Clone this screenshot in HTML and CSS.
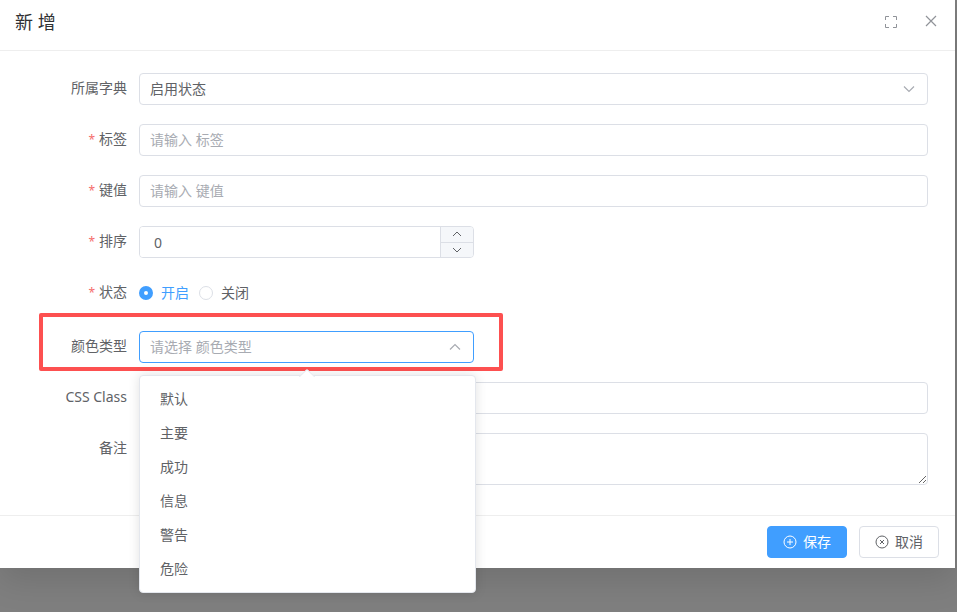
FILE: index.html
```html
<!DOCTYPE html>
<html lang="zh-CN">
<head>
    <meta charset="UTF-8">
    <title>新增字典数据</title>
    <meta name="viewport" content="width=device-width, initial-scale=1.0">
    <link rel="stylesheet" href="styles.css">
</head>
<body>
    <div class="dialog" role="dialog" aria-labelledby="dialog-title">
        <header class="dialog-header">
            <h1 class="dialog-title" id="dialog-title">新 增</h1>
            <div class="dialog-tools">
                <button type="button" class="icon-button" aria-label="全屏">
                    <svg viewBox="0 0 16 16" width="16" height="16" fill="none" stroke="currentColor">
                        <path d="M2.5 6V2.5H6M10 2.5H13.5V6M13.5 10V13.5H10M6 13.5H2.5V10"/>
                    </svg>
                </button>
                <button type="button" class="icon-button" aria-label="关闭">
                    <svg viewBox="0 0 16 16" width="16" height="16" fill="none" stroke="currentColor" stroke-width="1.2">
                        <path d="M3 2L13 12M13 2L3 12"/>
                    </svg>
                </button>
            </div>
        </header>

        <form class="dialog-form">
            <div class="form-body">
                <div class="form-item">
                    <label class="form-label" for="dict">所属字典</label>
                    <div class="form-content select-box">
                        <select class="control" id="dict">
                            <option>启用状态</option>
                        </select>
                        <svg class="select-arrow" viewBox="0 0 14 14" width="14" height="14" fill="none" stroke="currentColor" stroke-width="1.2">
                            <path d="M2 4.5L7 9.5L12 4.5"/>
                        </svg>
                    </div>
                </div>

                <div class="form-item required">
                    <label class="form-label" for="label">标签</label>
                    <div class="form-content">
                        <input class="control" id="label" type="text" placeholder="请输入 标签">
                    </div>
                </div>

                <div class="form-item required">
                    <label class="form-label" for="value">键值</label>
                    <div class="form-content">
                        <input class="control" id="value" type="text" placeholder="请输入 键值">
                    </div>
                </div>

                <div class="form-item required half">
                    <label class="form-label" for="sort">排序</label>
                    <div class="form-content number-box">
                        <input class="number-input" id="sort" type="number" value="0">
                        <div class="number-steps">
                            <button type="button" class="step-button" aria-label="增加">
                                <svg viewBox="0 0 12 12" width="12" height="12" fill="none" stroke="currentColor">
                                    <path d="M2 8L6 4L10 8"/>
                                </svg>
                            </button>
                            <button type="button" class="step-button" aria-label="减少">
                                <svg viewBox="0 0 12 12" width="12" height="12" fill="none" stroke="currentColor">
                                    <path d="M2 4L6 8L10 4"/>
                                </svg>
                            </button>
                        </div>
                    </div>
                </div>

                <div class="form-item required status-item" role="radiogroup" aria-labelledby="status-label">
                    <span class="form-label" id="status-label">状态</span>
                    <div class="form-content radio-group">
                        <label class="radio"><input type="radio" name="status" value="1" checked><span>开启</span></label>
                        <label class="radio"><input type="radio" name="status" value="0"><span>关闭</span></label>
                    </div>
                </div>

                <div class="form-item half highlight">
                    <label class="form-label" for="color">颜色类型</label>
                    <div class="form-content select-box">
                        <select class="control placeholder active" id="color">
                            <option value="">请选择 颜色类型</option>
                        </select>
                        <svg class="select-arrow" viewBox="0 0 14 14" width="14" height="14" fill="none" stroke="currentColor" stroke-width="1.2">
                            <path d="M2 9.5L7 4.5L12 9.5"/>
                        </svg>
                        <ul class="dropdown" role="listbox" aria-label="颜色类型">
                            <li class="dropdown-item" role="option">默认</li>
                            <li class="dropdown-item" role="option">主要</li>
                            <li class="dropdown-item" role="option">成功</li>
                            <li class="dropdown-item" role="option">信息</li>
                            <li class="dropdown-item" role="option">警告</li>
                            <li class="dropdown-item" role="option">危险</li>
                        </ul>
                    </div>
                </div>

                <div class="form-item">
                    <label class="form-label" for="css-class">CSS Class</label>
                    <div class="form-content">
                        <input class="control" id="css-class" type="text">
                    </div>
                </div>

                <div class="form-item">
                    <label class="form-label" for="remark">备注</label>
                    <div class="form-content">
                        <textarea class="control textarea" id="remark"></textarea>
                    </div>
                </div>
            </div>

            <footer class="dialog-footer">
                <button type="submit" class="button button-primary">
                    <svg viewBox="0 0 14 14" width="14" height="14" fill="none" stroke="currentColor">
                        <circle cx="7" cy="7" r="6"/>
                        <path d="M7 4V10M4 7H10"/>
                    </svg>
                    <span>保存</span>
                </button>
                <button type="button" class="button">
                    <svg viewBox="0 0 14 14" width="14" height="14" fill="none" stroke="currentColor">
                        <circle cx="7" cy="7" r="6"/>
                        <path d="M5 5L9 9M9 5L5 9"/>
                    </svg>
                    <span>取消</span>
                </button>
            </footer>
        </form>
    </div>
</body>
</html>
```

FILE: styles.css
```css
* {
    box-sizing: border-box;
}

body {
    margin: 0;
    min-height: 100vh;
    background-color: #7f7f7f;
    color: #606266;
    font-family: "Noto Sans", "Noto Sans CJK SC", sans-serif;
    font-size: 14px;
}

button,
input,
select,
textarea {
    font: inherit;
    color: inherit;
}

svg {
    display: block;
}

.dialog {
    margin-right: 2px;
    background-color: #fff;
    box-shadow: 0 12px 32px rgba(0, 0, 0, 0.12);
}

/* 标题栏 */
.dialog-header {
    display: flex;
    justify-content: space-between;
    align-items: center;
    padding: 10px 16px 16px 15px;
    border-bottom: 1px solid #eeeeee;
}

.dialog-title {
    margin: 0;
    font-size: 18px;
    font-weight: normal;
    line-height: 24px;
    color: #303133;
}

.dialog-tools {
    display: flex;
    gap: 24px;
}

.icon-button {
    padding: 0;
    border: none;
    background: none;
    color: #909399;
    cursor: pointer;
}

/* 表单 */
.form-body {
    display: flex;
    flex-direction: column;
    gap: 19px;
    padding: 22px 27px 30px 20px;
}

.form-item {
    display: flex;
    align-items: flex-start;
}

.form-item.half {
    width: 50%;
}

.form-label {
    width: 119px;
    flex: none;
    padding-right: 12px;
    line-height: 30px;
    text-align: right;
}

.required .form-label::before {
    content: "*";
    margin-right: 4px;
    color: #f56c6c;
    font-size: 12px;
}

.form-content {
    flex: 1;
    min-width: 0;
}

.control {
    display: block;
    width: 100%;
    height: 32px;
    padding: 0 10px 2px;
    border: 1px solid #dcdfe6;
    border-radius: 4px;
    background-color: #fff;
    outline: none;
    appearance: none;
}

.control::placeholder,
.control.placeholder {
    color: #a8abb2;
    opacity: 1;
}

.control.active {
    border-color: #409eff;
}

.textarea {
    height: 52px;
    padding: 5px 10px;
    resize: vertical;
}

.select-box {
    position: relative;
}

.select-arrow {
    position: absolute;
    top: 9px;
    right: 12px;
    color: #a8abb2;
    pointer-events: none;
}

/* 数字输入框 */
.number-box {
    display: flex;
    height: 32px;
    border: 1px solid #dcdfe6;
    border-radius: 4px;
    overflow: hidden;
}

.number-input {
    flex: 1;
    min-width: 0;
    padding: 0 14px;
    border: none;
    outline: none;
    appearance: textfield;
}

.number-input::-webkit-inner-spin-button {
    appearance: none;
}

.number-steps {
    display: flex;
    flex-direction: column;
    width: 33px;
    border-left: 1px solid #dcdfe6;
}

.step-button {
    display: flex;
    flex: 1;
    justify-content: center;
    align-items: center;
    padding: 0;
    border: none;
    background-color: #f5f7fa;
    cursor: pointer;
}

.step-button + .step-button {
    border-top: 1px solid #dcdfe6;
}

/* 单选 */
.status-item {
    min-height: 35px;
}

.radio-group {
    display: flex;
    gap: 10px;
}

.radio {
    display: flex;
    align-items: center;
    gap: 8px;
    height: 32px;
    cursor: pointer;
}

.radio span,
.button span {
    padding-bottom: 2px;
}

.radio input {
    width: 14px;
    height: 14px;
    margin: 0;
    border: 1px solid #dcdfe6;
    border-radius: 50%;
    background-color: #fff;
    appearance: none;
}

.radio input:checked {
    border: 5px solid #409eff;
}

.radio input:checked + span {
    color: #409eff;
}

/* 红框标注 */
.highlight {
    position: relative;
}

.highlight::before {
    content: "";
    position: absolute;
    inset: -18px -29px -8px 19px;
    border: 4px solid #fd5050;
    border-radius: 2px;
    pointer-events: none;
}

/* 下拉菜单 */
.dropdown {
    position: absolute;
    top: 44px;
    left: 0;
    right: -2px;
    z-index: 10;
    margin: 0;
    padding: 6px 0;
    border: 1px solid #e4e7ed;
    border-radius: 4px;
    background-color: #fff;
    box-shadow: 0 0 12px rgba(0, 0, 0, 0.12);
    list-style: none;
}

.dropdown::before {
    content: "";
    position: absolute;
    top: -5px;
    left: 50%;
    width: 10px;
    height: 10px;
    margin-left: -7px;
    border: 1px solid #e4e7ed;
    border-right-color: transparent;
    border-bottom-color: transparent;
    border-top-left-radius: 2px;
    background-color: #fff;
    transform: rotate(45deg);
}

.dropdown-item {
    padding: 0 20px;
    line-height: 34px;
    cursor: pointer;
}

/* 底部按钮 */
.dialog-footer {
    display: flex;
    justify-content: flex-end;
    gap: 12px;
    padding: 10px 16px;
    border-top: 1px solid #eeeeee;
}

.button {
    display: flex;
    align-items: center;
    gap: 6px;
    height: 32px;
    padding: 0 15px;
    border: 1px solid #dcdfe6;
    border-radius: 4px;
    background-color: #fff;
    cursor: pointer;
}

.button-primary {
    border-color: #409eff;
    background-color: #409eff;
    color: #fff;
}
```
